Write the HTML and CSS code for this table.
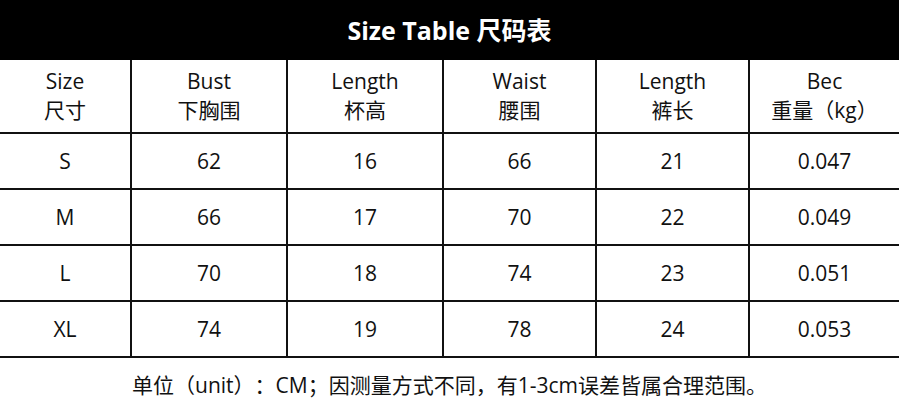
FILE: index.html
```html
<!DOCTYPE html>
<html lang="zh-CN">
<head>
<meta charset="utf-8">
<title>Size Table 尺码表</title>
<link rel="stylesheet" href="styles.css">
</head>
<body>
<div class="page">
  <div class="title-bar">Size Table 尺码表</div>
  <div class="table">
    <div class="cell head"><span>Size</span><span class="cn">尺寸</span></div>
    <div class="cell head"><span>Bust</span><span class="cn">下胸围</span></div>
    <div class="cell head"><span>Length</span><span class="cn">杯高</span></div>
    <div class="cell head"><span>Waist</span><span class="cn">腰围</span></div>
    <div class="cell head"><span>Length</span><span class="cn">裤长</span></div>
    <div class="cell head last"><span>Bec</span><span class="cn">重量（kg）</span></div>

    <div class="cell">S</div><div class="cell">62</div><div class="cell">16</div><div class="cell">66</div><div class="cell">21</div><div class="cell last">0.047</div>
    <div class="cell">M</div><div class="cell">66</div><div class="cell">17</div><div class="cell">70</div><div class="cell">22</div><div class="cell last">0.049</div>
    <div class="cell">L</div><div class="cell">70</div><div class="cell">18</div><div class="cell">74</div><div class="cell">23</div><div class="cell last">0.051</div>
    <div class="cell">XL</div><div class="cell">74</div><div class="cell">19</div><div class="cell">78</div><div class="cell">24</div><div class="cell last">0.053</div>
  </div>
  <div class="note">单位（unit）：CM；因测量方式不同，有1-3cm误差皆属合理范围。</div>
</div>
</body>
</html>
```
FILE: styles.css
```css
* { box-sizing: border-box; }
html, body {
  margin: 0;
  padding: 0;
  background: #fff;
}
body {
  font-family: "Open Sans", "Noto Sans CJK SC", sans-serif;
  color: #111;
  text-spacing-trim: space-all;
}
.page {
  width: 899px;
  height: 411px;
  display: flex;
  flex-direction: column;
}
.title-bar {
  height: 60px;
  background: #000;
  color: #fff;
  font-weight: 700;
  font-size: 25px;
  display: flex;
  align-items: center;
  justify-content: center;
  padding-bottom: 2px;
}
.table {
  display: grid;
  grid-template-columns: 132px 156px 156px 153px 153px 149px;
  grid-template-rows: 74px 56px 56px 56px 56px;
}
.cell {
  border-right: 2px solid #111;
  border-bottom: 2px solid #111;
  display: flex;
  align-items: center;
  justify-content: center;
  font-size: 21px;
  line-height: 1;
}
.cell.last { border-right: none; }
.cell.head {
  flex-direction: column;
  line-height: 29px;
}
.cell.head .cn {
  font-size: 21px;
}
.note {
  flex: 1;
  display: flex;
  align-items: center;
  justify-content: center;
  font-size: 21px;
  padding-bottom: 2px;
}
```
